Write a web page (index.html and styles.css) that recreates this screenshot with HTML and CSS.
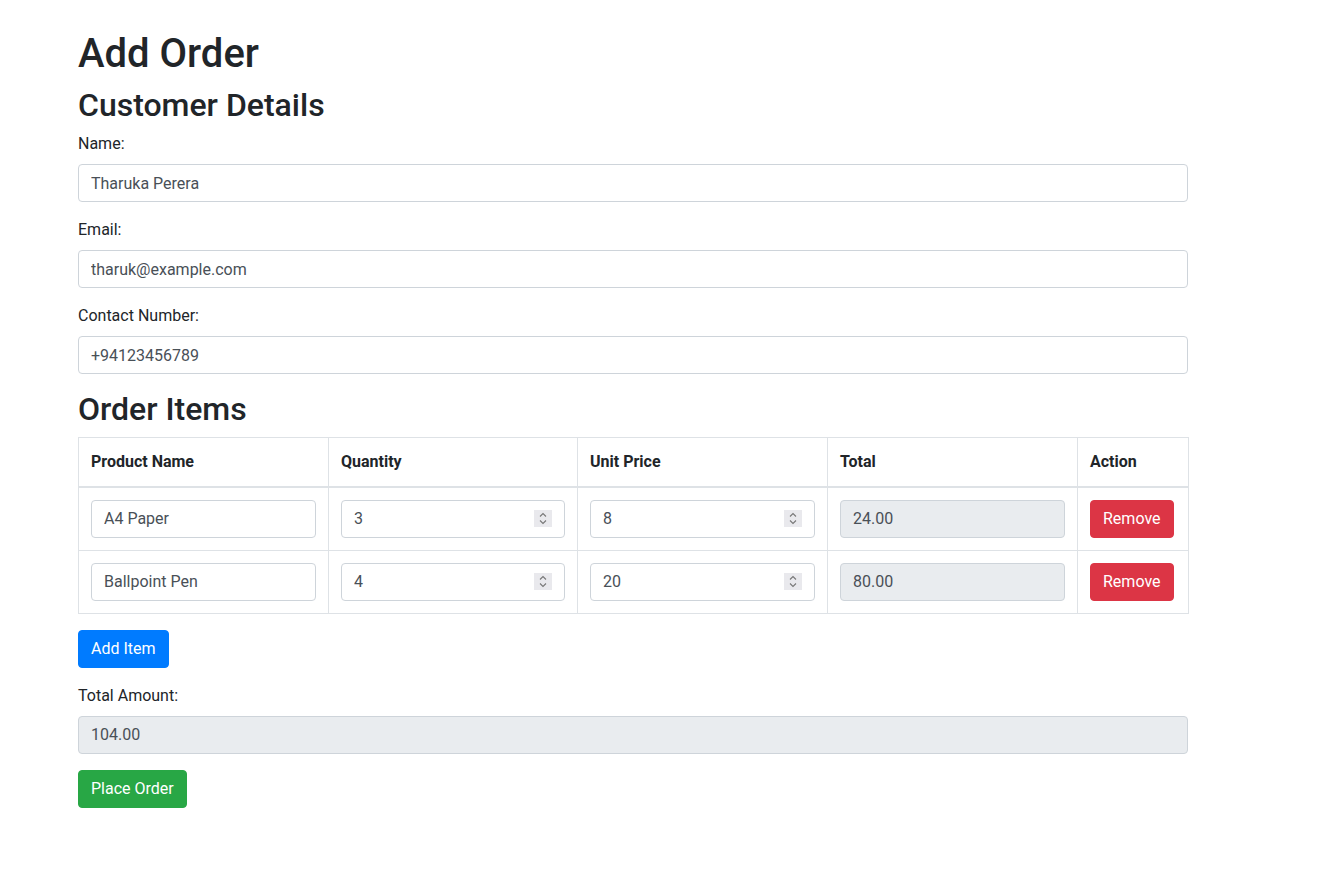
FILE: index.html
```html
<!DOCTYPE html>
<html lang="en">
<head>
<meta charset="utf-8">
<title>Add Order</title>
<link rel="stylesheet" href="styles.css">
</head>
<body>
<div class="container">
  <h1 class="title">Add Order</h1>
  <h2 class="section">Customer Details</h2>
  <div class="form-group">
    <label class="label">Name:</label>
    <input class="form-control" type="text" value="Tharuka Perera">
  </div>
  <div class="form-group">
    <label class="label">Email:</label>
    <input class="form-control" type="text" value="tharuk@example.com">
  </div>
  <div class="form-group">
    <label class="label">Contact Number:</label>
    <input class="form-control" type="text" value="+94123456789">
  </div>
  <h2 class="section">Order Items</h2>
  <table class="table">
    <colgroup>
      <col class="c1"><col class="c2"><col class="c3"><col class="c4"><col class="c5">
    </colgroup>
    <thead>
      <tr><th>Product Name</th><th>Quantity</th><th>Unit Price</th><th>Total</th><th>Action</th></tr>
    </thead>
    <tbody>
      <tr>
        <td><input class="form-control" type="text" value="A4 Paper"></td>
        <td><div class="num"><input class="form-control" type="text" value="3"><span class="spin"><svg width="18" height="17" viewBox="0 0 18 17"><path d="M6 6.5 L9 3.5 L12 6.5" fill="none" stroke="#777" stroke-width="1.1"/><path d="M6 10.5 L9 13.5 L12 10.5" fill="none" stroke="#777" stroke-width="1.1"/></svg></span></div></td>
        <td><div class="num"><input class="form-control" type="text" value="8"><span class="spin"><svg width="18" height="17" viewBox="0 0 18 17"><path d="M6 6.5 L9 3.5 L12 6.5" fill="none" stroke="#777" stroke-width="1.1"/><path d="M6 10.5 L9 13.5 L12 10.5" fill="none" stroke="#777" stroke-width="1.1"/></svg></span></div></td>
        <td><input class="form-control" type="text" value="24.00" readonly></td>
        <td><button class="btn btn-danger" type="button">Remove</button></td>
      </tr>
      <tr>
        <td><input class="form-control" type="text" value="Ballpoint Pen"></td>
        <td><div class="num"><input class="form-control" type="text" value="4"><span class="spin"><svg width="18" height="17" viewBox="0 0 18 17"><path d="M6 6.5 L9 3.5 L12 6.5" fill="none" stroke="#777" stroke-width="1.1"/><path d="M6 10.5 L9 13.5 L12 10.5" fill="none" stroke="#777" stroke-width="1.1"/></svg></span></div></td>
        <td><div class="num"><input class="form-control" type="text" value="20"><span class="spin"><svg width="18" height="17" viewBox="0 0 18 17"><path d="M6 6.5 L9 3.5 L12 6.5" fill="none" stroke="#777" stroke-width="1.1"/><path d="M6 10.5 L9 13.5 L12 10.5" fill="none" stroke="#777" stroke-width="1.1"/></svg></span></div></td>
        <td><input class="form-control" type="text" value="80.00" readonly></td>
        <td><button class="btn btn-danger" type="button">Remove</button></td>
      </tr>
    </tbody>
  </table>
  <button class="btn btn-primary add" type="button">Add Item</button>
  <div class="form-group">
    <label class="label">Total Amount:</label>
    <input class="form-control" type="text" value="104.00" readonly>
  </div>
  <button class="btn btn-success" type="button">Place Order</button>
</div>
</body>
</html>
```

FILE: styles.css
```css
* { box-sizing: border-box; }
html, body { margin: 0; padding: 0; background: #fff; }
body {
  font-family: Roboto, "Helvetica Neue", Arial, "Liberation Sans", sans-serif;
  font-size: 16px;
  line-height: 1.5;
  color: #212529;
}
.container {
  width: 1110px;
  margin-left: 78px;
  padding-top: 30px;
  padding-bottom: 40px;
}
.title {
  font-size: 40px;
  font-weight: 500;
  line-height: 1.2;
  margin: 0 0 8px;
}
.section {
  font-size: 32px;
  font-weight: 500;
  line-height: 1.2;
  margin: 0 0 8px;
}
.form-group { margin-bottom: 16px; }
.label {
  display: inline-block;
  margin-bottom: 8px;
}
.form-control {
  display: block;
  width: 100%;
  height: 38px;
  padding: 6px 12px;
  font-family: inherit;
  font-size: 16px;
  line-height: 1.5;
  color: #495057;
  background: #fff;
  border: 1px solid #ced4da;
  border-radius: 4px;
  margin: 0;
}
.form-control[readonly] { background: #e9ecef; }
.table {
  width: 100%;
  border-collapse: collapse;
  table-layout: fixed;
  margin-bottom: 16px;
}
.c1 { width: 250px; }
.c2 { width: 249px; }
.c3 { width: 250px; }
.c4 { width: 250px; }
.c5 { width: 111px; }
.table th, .table td {
  border: 1px solid #dee2e6;
  padding: 12px;
  text-align: left;
  vertical-align: top;
}
.table th {
  font-weight: 700;
  border-bottom-width: 2px;
  vertical-align: bottom;
}
.num { position: relative; }
.spin {
  position: absolute;
  right: 13px;
  top: 10px;
  width: 18px;
  height: 17px;
  background: #e9e9ed;
  display: block;
}
.spin svg { display: block; }
.btn {
  display: inline-block;
  font-family: inherit;
  font-size: 16px;
  line-height: 1.5;
  padding: 6px 12px;
  border: 1px solid transparent;
  border-radius: 4px;
  color: #fff;
  cursor: pointer;
}
.btn-danger { background: #dc3545; border-color: #dc3545; }
.btn-primary { background: #007bff; border-color: #007bff; }
.btn-success { background: #28a745; border-color: #28a745; }
.add { margin-bottom: 16px; }
```
